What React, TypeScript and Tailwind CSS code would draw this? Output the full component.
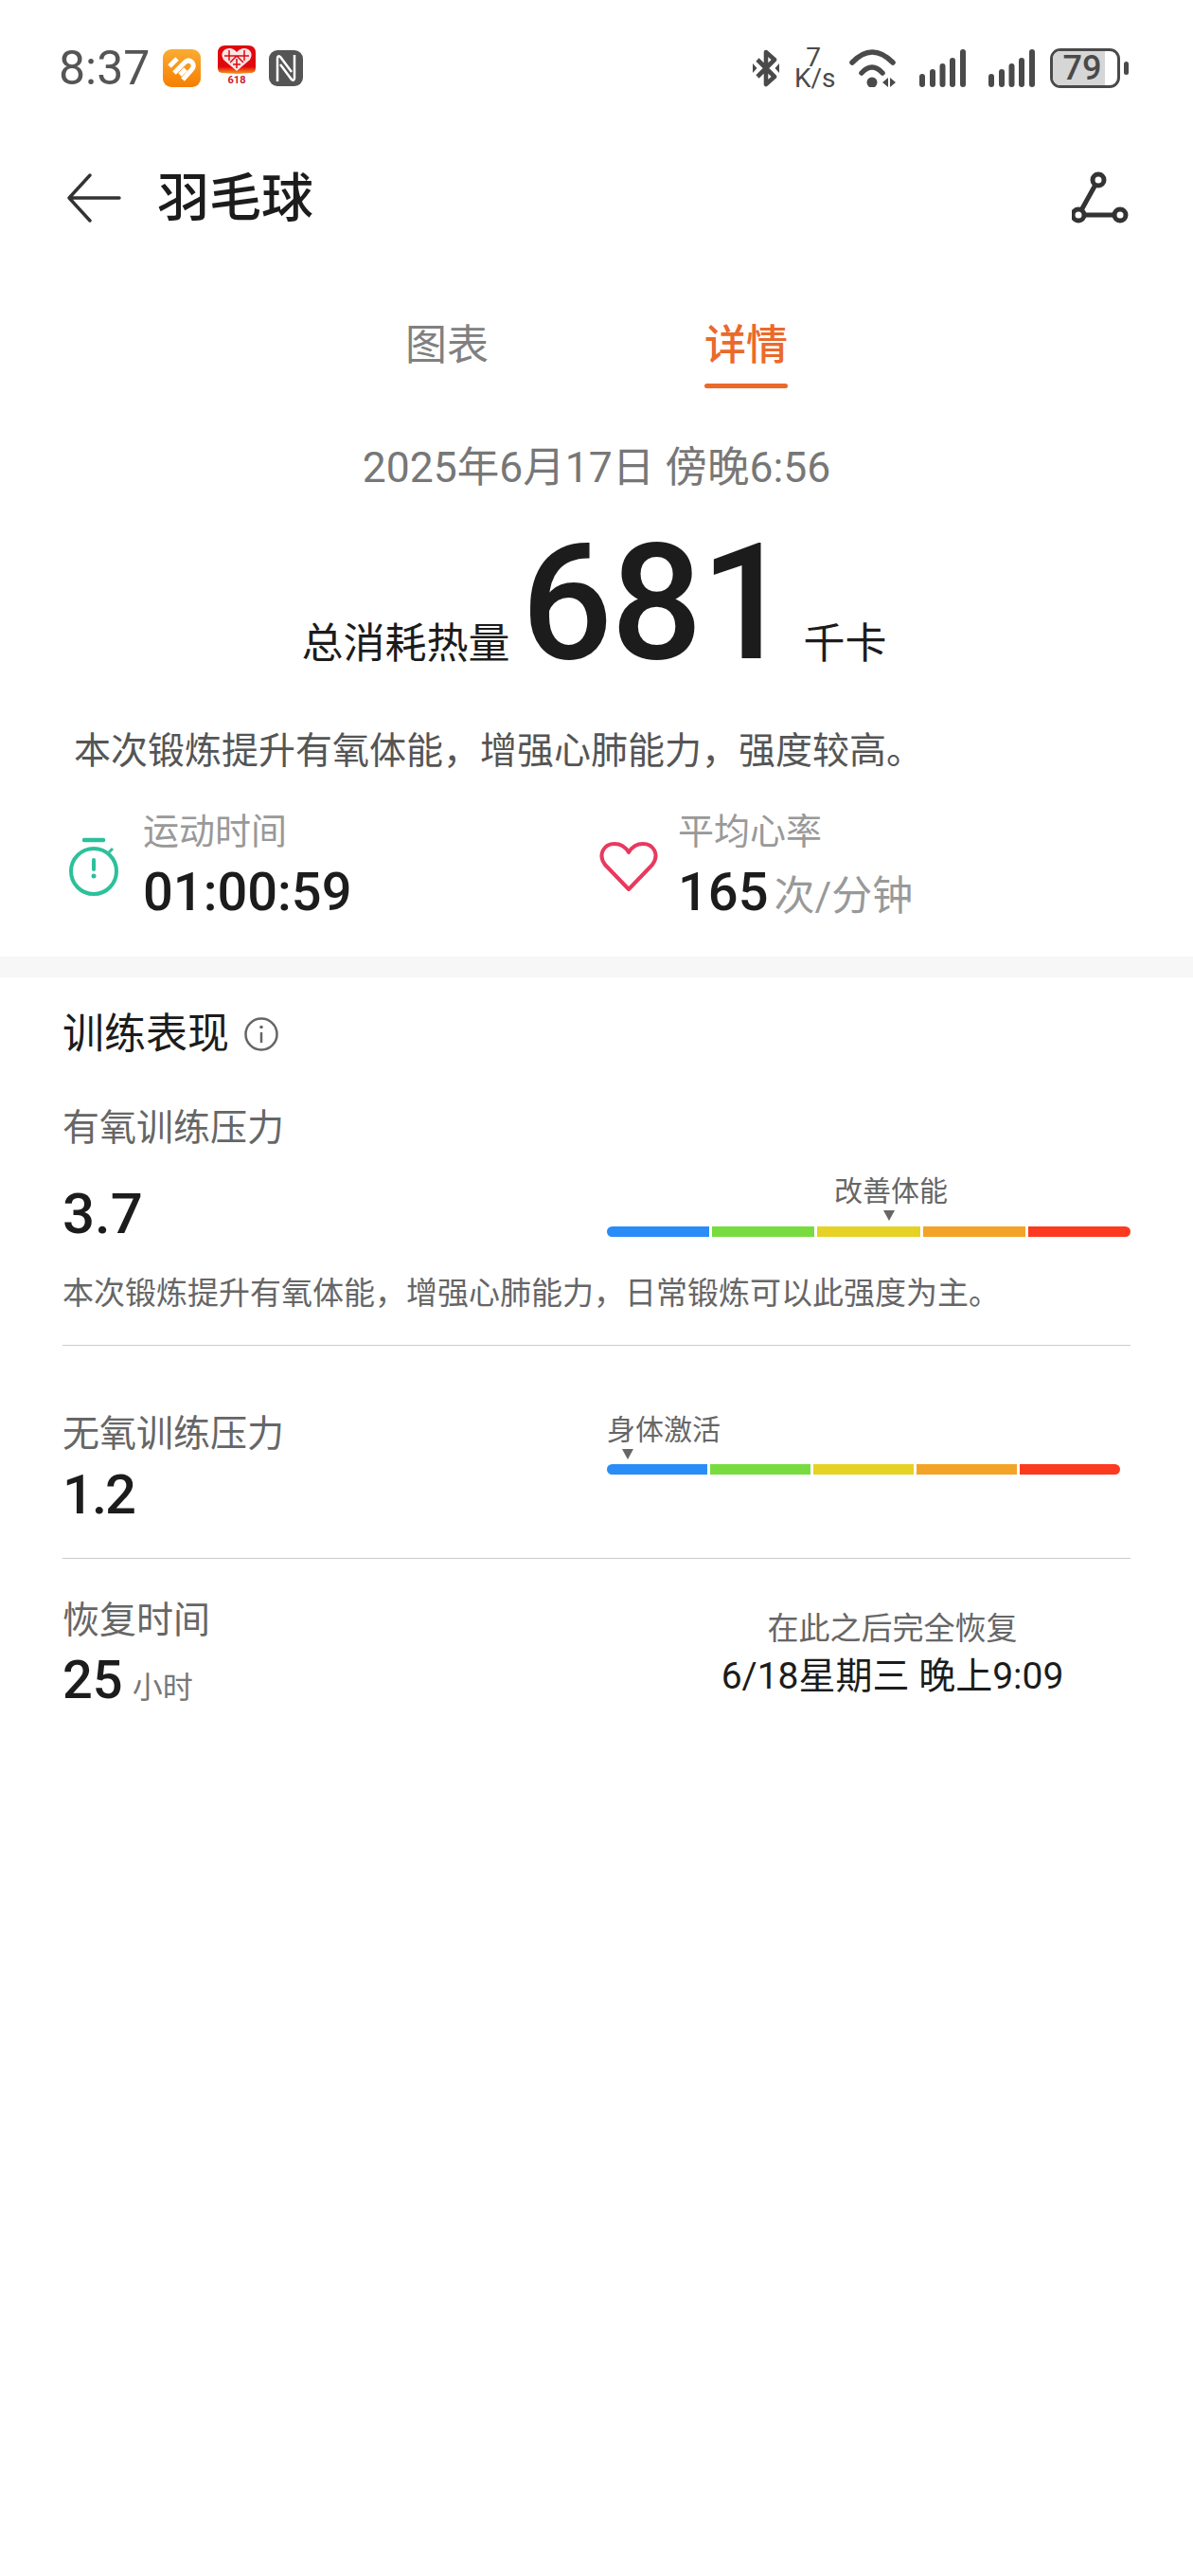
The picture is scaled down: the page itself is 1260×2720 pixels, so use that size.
const sans = "font-['Roboto','Noto_Sans_CJK_SC',sans-serif]";

function HealthIcon() {
  return (
    <svg width="40" height="40" viewBox="0 0 40 40" fill="none">
      <defs>
        <linearGradient id="hg" x1="0" y1="0" x2="0" y2="1">
          <stop offset="0" stopColor="#fbac33" />
          <stop offset="1" stopColor="#f57f00" />
        </linearGradient>
      </defs>
      <rect width="40" height="40" rx="9" fill="url(#hg)" />
      <g stroke="#fff" strokeWidth="5">
        <path d="M7 18 L15 10" />
        <path d="M12 25 L23 14 Q27 10 31 14 Q34 18 30 22 L21 32" />
        <path d="M18 27 L24 21" />
      </g>
    </svg>
  );
}

function PddIcon() {
  return (
    <svg width="40" height="44" viewBox="0 0 40 44" className="mb-[4px]">
      <defs>
        <linearGradient id="pd" x1="0" y1="0" x2="0" y2="1">
          <stop offset="0.75" stopColor="#e0080f" />
          <stop offset="1" stopColor="#f7a01c" />
        </linearGradient>
      </defs>
      <path d="M0 8 Q0 0 8 0 H32 Q40 0 40 8 V24 Q40 28 36 29 L20 30 L4 29 Q0 28 0 24 Z" fill="url(#pd)" />
      <path d="M20 27 L6 15 Q2 8 8 4 Q15 1 20 7 Q25 1 32 4 Q38 8 34 15 Z" fill="#fbe4e4" />
      <path d="M12 5 V16 M28 5 V16 M7 11 H33 M20 11 L13 18 M20 11 L27 18 M16 20 H24 M20 14 V24" stroke="#e0080f" strokeWidth="1.5" fill="none" />
      <text x="20" y="40" textAnchor="middle" fontSize="11" fontWeight="700" fill="#c8202a" fontFamily="Roboto">618</text>
    </svg>
  );
}

function NfcIcon() {
  return (
    <svg width="36" height="38" viewBox="0 0 36 38" fill="none">
      <rect width="36" height="38" rx="9" fill="#555" />
      <g stroke="#fff" strokeWidth="2.500">
        <path d="M9 33 V9 Q9 5 12 7 L24 23" />
        <path d="M27 5 V29 Q27 33 24 31 L12 15" />
      </g>
    </svg>
  );
}

function BluetoothIcon() {
  return (
    <svg width="28" height="40" viewBox="0 0 28 40" fill="none">
      <path d="M5 11 L23 29 L14 37 V20 M14 20 V3 L23 11 L5 29" stroke="#4a4a4a" strokeWidth="4.600" strokeLinejoin="round" />
      <path d="M0 15 L4.500 20 L0 25 Z M28 15 L23.500 20 L28 25 Z" fill="#4a4a4a" />
    </svg>
  );
}

function WifiIcon() {
  return (
    <svg width="50" height="40" viewBox="0 0 50 40" fill="none">
      <path d="M3 14 Q24 -8 46 14" stroke="#4a4a4a" strokeWidth="5.500" strokeLinecap="round" />
      <path d="M13 25 Q24 13 35 25" stroke="#4a4a4a" strokeWidth="5.500" strokeLinecap="round" />
      <circle cx="24" cy="35" r="5.500" fill="#4a4a4a" />
      <path d="M35 35 L41 30 V40 Z M43 30 L49 35 L43 40 Z" fill="#4a4a4a" />
    </svg>
  );
}

function SignalIcon() {
  return (
    <svg width="49" height="40" viewBox="0 0 49 40" fill="#4a4a4a">
      <rect x="0" y="26" width="6" height="14" rx="3" />
      <rect x="11" y="21" width="6" height="19" rx="3" />
      <rect x="21.500" y="15" width="6" height="25" rx="3" />
      <rect x="32" y="9" width="6" height="31" rx="3" />
      <rect x="43" y="0" width="6" height="40" rx="3" />
    </svg>
  );
}

function Battery() {
  return (
    <div className="flex items-center gap-[4px]">
      <div className="relative w-[74px] h-[42px] rounded-[11px] border-[3px] border-[#4a4a4a] overflow-hidden">
        <div className="absolute left-0 top-0 bottom-0 w-[55px] bg-[#d6d6d6]" />
        <div className={`relative text-center text-[36px] leading-[36px] font-medium text-[#4a4a4a] pr-[6px] ${sans}`}>79</div>
      </div>
      <div className="w-[5px] h-[14px] rounded-full bg-[#4a4a4a]" />
    </div>
  );
}

function StatusBar() {
  return (
    <div className="h-[84px] pt-[52px] pl-[62px] pr-[68px] flex items-start justify-between">
      <div className="flex items-center h-[40px]">
        <span className={`w-[94px] text-[50px] leading-[40px] text-[#555] ${sans}`}>8:37</span>
        <div className="ml-[16px]"><HealthIcon /></div>
        <div className="ml-[18px]"><PddIcon /></div>
        <div className="ml-[14px]"><NfcIcon /></div>
      </div>
      <div className="flex items-center h-[40px]">
        <BluetoothIcon />
        <div className={`ml-[16px] w-[40px] text-center text-[#4a4a4a] text-[28px] leading-[22px] ${sans}`}>
          7<br />K/s
        </div>
        <div className="ml-[18px]"><WifiIcon /></div>
        <div className="ml-[24px]"><SignalIcon /></div>
        <div className="ml-[24px]"><SignalIcon /></div>
        <div className="ml-[16px]"><Battery /></div>
      </div>
    </div>
  );
}

function Header() {
  return (
    <div className="mt-[85px] h-[80px] px-[68px] flex items-center justify-between" >
      <div className="flex items-center">
        <svg width="60" height="52" viewBox="0 0 60 52" fill="none" className="ml-[2px]">
          <path d="M25 2 L3 26 L25 50 M3 26 H56" stroke="#333" strokeWidth="3.400" strokeLinecap="round" strokeLinejoin="round" />
        </svg>
        <span className={`ml-[36px] text-[55px] leading-[60px] font-medium text-[#1c1c1c] ${sans}`}>羽毛球</span>
      </div>
      <svg width="60" height="56" viewBox="0 0 60 56" fill="none" stroke="#333" strokeWidth="5">
        <circle cx="28" cy="9" r="6" />
        <circle cx="7" cy="46" r="6" />
        <circle cx="51" cy="46" r="6" />
        <path d="M25 14 L10 41 M13 46 H45" />
      </svg>
    </div>
  );
}

function Tabs() {
  return (
    <div className={`mt-[86px] flex justify-center gap-[228px] ${sans}`}>
      <div className="w-[88px] text-[44px] leading-[60px] text-[#808080] text-center">图表</div>
      <div className="w-[88px] text-center">
        <div className="text-[44px] leading-[60px] font-medium text-[#ea6a2c]">详情</div>
        <div className="mt-[10px] h-[5px] rounded-full bg-[#ea6a2c]" />
      </div>
    </div>
  );
}

function Summary() {
  return (
    <div className={sans}>
      <div className="mt-[54px] text-center text-[44.500px] leading-[60px] text-[#777]">2025年6月17日 傍晚6:56</div>
      <div className="mt-[23px] flex items-baseline justify-center h-[180px] pr-[5px]">
        <span className="text-[44px] font-normal text-[#1c1c1c]">总消耗热量</span>
        <span className="ml-[12px] text-[170px] leading-[180px] tracking-[-2px] font-medium text-[#1c1c1c]">681</span>
        <span className="ml-[14px] text-[44px] text-[#1c1c1c]">千卡</span>
      </div>
      <div className="mt-[38px] pl-[78px] text-[39px] leading-[56px] text-[#555]">本次锻炼提升有氧体能，增强心肺能力，强度较高。</div>
    </div>
  );
}

function Metric(props: { icon: React.ReactNode; label: string; value: string; unit?: string; width: string }) {
  return (
    <div className={`flex items-center ${props.width}`}>
      <div className="w-[78px] mr-[13px] mb-[12px] flex justify-center">{props.icon}</div>
      <div>
        <div className="text-[38px] leading-[50px] text-[#999]">{props.label}</div>
        <div className="mt-[6px] leading-[66px] text-[#1c1c1c]">
          <span className="text-[56px] font-medium">{props.value}</span>
          {props.unit && <span className="ml-[6px] text-[43px] text-[#999]">{props.unit}</span>}
        </div>
      </div>
    </div>
  );
}

function Metrics() {
  return (
    <div className={`mt-[38px] h-[124px] pl-[60px] flex ${sans}`}>
      <Metric
        width="w-[565px]"
        label="运动时间"
        value="01:00:59"
        icon={
          <svg width="56" height="62" viewBox="0 0 56 62" fill="none" stroke="#2cc09b" strokeWidth="4">
            <path d="M18 3 H38" strokeWidth="4.500" strokeLinecap="round" />
            <circle cx="28" cy="36" r="24" />
            <path d="M44 16 L48 12" strokeWidth="3" />
            <path d="M28 24 V34" strokeWidth="4" strokeLinecap="round" />
            <circle cx="28" cy="41" r="2.500" fill="#2cc09b" stroke="none" />
          </svg>
        }
      />
      <Metric
        width=""
        label="平均心率"
        value="165"
        unit="次/分钟"
        icon={
          <svg width="62" height="54" viewBox="0 0 62 54" fill="none" stroke="#e8395f" strokeWidth="4" strokeLinejoin="round">
            <path d="M31 51 L6 25 C-2 14 5 3 16 3 C23 3 28 7 31 12 C34 7 39 3 46 3 C57 3 64 14 56 25 Z" />
          </svg>
        }
      />
    </div>
  );
}

function ScaleBar(props: { narrow?: boolean }) {
  const colors = ["bg-[#2a8cf6]", "bg-[#78dc40]", "bg-[#e6d224]", "bg-[#f3a428]", "bg-[#fc3a20]"];
  return (
    <div className={`flex gap-[3px] h-[11px] rounded-full overflow-hidden ${props.narrow ? "w-[542px]" : "w-[553px]"}`}>
      {colors.map((c) => (
        <div key={c} className={`flex-1 ${c}`} />
      ))}
    </div>
  );
}

function Triangle() {
  return <div className="w-0 h-0 border-l-[6px] border-r-[6px] border-t-[11px] border-l-transparent border-r-transparent border-t-[#666]" />;
}

function Training() {
  return (
    <div className={`px-[66px] ${sans}`}>
      <div className="pt-[38px] flex items-center h-[82px]">
        <span className="text-[44px] leading-[50px] font-normal text-[#1c1c1c]">训练表现</span>
        <svg width="36" height="36" viewBox="0 0 36 36" fill="none" stroke="#666" strokeWidth="2.500" className="ml-[16px]">
          <circle cx="18" cy="18" r="16.500" />
          <path d="M18 16 V27" />
          <circle cx="18" cy="10.500" r="1.800" fill="#666" stroke="none" />
        </svg>
      </div>

      <div className="mt-[52px] text-[39px] leading-[50px] text-[#666]">有氧训练压力</div>
      <div className="mt-[20px] flex items-start justify-between">
        <div className="mt-[10px] text-[60px] leading-[72px] font-medium text-[#1c1c1c]">3.7</div>
        <div className="w-[553px] mt-[2px]">
          <div className="w-[130px] ml-[235px] text-center text-[30px] leading-[40px] text-[#666]">改善体能</div>
          <div className="ml-[292px]"><Triangle /></div>
          <div className="mt-[6px]"><ScaleBar /></div>
        </div>
      </div>
      <div className="mt-[26px] text-[33px] leading-[44px] text-[#666]">本次锻炼提升有氧体能，增强心肺能力，日常锻炼可以此强度为主。</div>
      <div className="mt-[32px] border-t border-[#ccc]" />

      <div className="mt-[62px] flex justify-between h-[162px]">
        <div>
          <div className="mt-[6px] text-[39px] leading-[50px] text-[#666]">无氧训练压力</div>
          <div className="mt-[3px] text-[58px] leading-[72px] tracking-[-2px] font-medium text-[#1c1c1c]">1.2</div>
        </div>
        <div className="w-[553px] mt-[7px]">
          <div className="text-[30px] leading-[40px] text-[#666]">身体激活</div>
          <div className="ml-[16px]"><Triangle /></div>
          <div className="mt-[5px]"><ScaleBar narrow /></div>
        </div>
      </div>
      <div className="border-t border-[#ccc]" />

      <div className="mt-[40px] flex justify-between">
        <div>
          <div className="text-[39px] leading-[50px] text-[#666]">恢复时间</div>
          <div className="mt-[5px] leading-[66px] text-[#1c1c1c]">
            <span className="text-[56px] font-medium">25</span>
            <span className="ml-[10px] text-[32px] text-[#777]">小时</span>
          </div>
        </div>
        <div className="w-[363px] mr-[70px] mt-[12px] text-center">
          <div className="text-[33px] leading-[44px] text-[#666]">在此之后完全恢复</div>
          <div className="mt-[5px] text-[39px] leading-[46px] text-[#1c1c1c]">6/18星期三 晚上9:09</div>
        </div>
      </div>
    </div>
  );
}

export default function App() {
  return (
    <div className="w-[1260px] h-[2720px] bg-white overflow-hidden">
      <StatusBar />
      <Header />
      <Tabs />
      <Summary />
      <Metrics />
      <div className="mt-[27px] h-[22px] bg-[#f7f7f7]" />
      <Training />
    </div>
  );
}
